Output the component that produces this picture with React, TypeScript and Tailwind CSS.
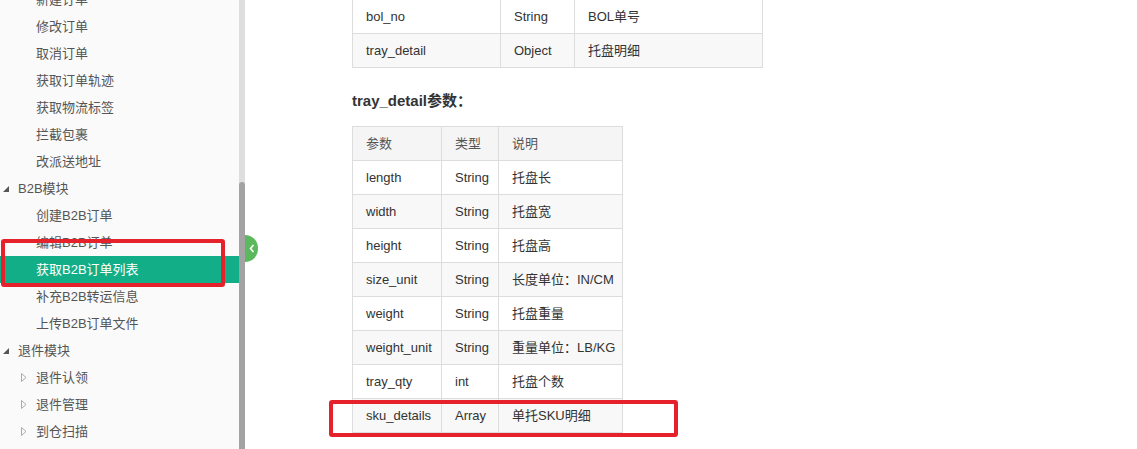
import React from 'react';

type NavItem = { label: string; level: 'group' | 'item' | 'folder'; active?: boolean };

const navItems: NavItem[] = [
  { label: '新建订单', level: 'item' },
  { label: '修改订单', level: 'item' },
  { label: '取消订单', level: 'item' },
  { label: '获取订单轨迹', level: 'item' },
  { label: '获取物流标签', level: 'item' },
  { label: '拦截包裹', level: 'item' },
  { label: '改派送地址', level: 'item' },
  { label: 'B2B模块', level: 'group' },
  { label: '创建B2B订单', level: 'item' },
  { label: '编辑B2B订单', level: 'item' },
  { label: '获取B2B订单列表', level: 'item', active: true },
  { label: '补充B2B转运信息', level: 'item' },
  { label: '上传B2B订单文件', level: 'item' },
  { label: '退件模块', level: 'group' },
  { label: '退件认领', level: 'folder' },
  { label: '退件管理', level: 'folder' },
  { label: '到仓扫描', level: 'folder' },
];

const topRows = [
  ['bol_no', 'String', 'BOL单号'],
  ['tray_detail', 'Object', '托盘明细'],
];

const trayRows = [
  ['length', 'String', '托盘长'],
  ['width', 'String', '托盘宽'],
  ['height', 'String', '托盘高'],
  ['size_unit', 'String', '长度单位：IN/CM'],
  ['weight', 'String', '托盘重量'],
  ['weight_unit', 'String', '重量单位：LB/KG'],
  ['tray_qty', 'int', '托盘个数'],
  ['sku_details', 'Array', '单托SKU明细'],
];

const font = { fontFamily: '"Liberation Sans", "Noto Sans CJK SC", sans-serif' };

const NavRow: React.FC<{ item: NavItem }> = ({ item }) => {
  const base = 'relative h-[27px] leading-[27px] text-[13px] whitespace-nowrap';
  if (item.level === 'group') {
    return (
      <div className={`${base} pl-[18px] text-[#555]`}>
        <svg className="absolute left-[3px] top-[11px]" width="6" height="6" viewBox="0 0 6 6">
          <polygon points="6,0 6,6 0,6" fill="#555" />
        </svg>
        {item.label}
      </div>
    );
  }
  if (item.level === 'folder') {
    return (
      <div className={`${base} pl-[36px] text-[#555]`}>
        <svg className="absolute left-[21px] top-[9px]" width="6" height="9" viewBox="0 0 6 9">
          <polygon points="0.5,0.5 5,4.5 0.5,8.5" fill="none" stroke="#aaa" strokeWidth="1" />
        </svg>
        {item.label}
      </div>
    );
  }
  return (
    <div className={`${base} pl-[36px] ${item.active ? 'bg-[#12ae87] text-white' : 'text-[#555]'}`}>
      {item.label}
    </div>
  );
};

const DocTable: React.FC<{ widths: number[]; rows: string[][]; head?: string[]; className: string }> = ({
  widths,
  rows,
  head,
  className,
}) => (
  <table className={`table-fixed border-collapse text-[13px] text-[#333] ${className}`}>
    <colgroup>
      {widths.map((w, i) => (
        <col key={i} style={{ width: w }} />
      ))}
    </colgroup>
    {head && (
      <thead>
        <tr className="bg-[#f5f5f5]">
          {head.map((h) => (
            <th key={h} className="h-[34px] border border-[#ddd] pl-[13px] text-left font-normal text-[#555]">
              {h}
            </th>
          ))}
        </tr>
      </thead>
    )}
    <tbody>
      {rows.map((r, i) => (
        <tr key={r[0]} className={i % 2 === 1 ? 'bg-[#f8f8f8]' : 'bg-white'}>
          {r.map((c, j) => (
            <td key={j} className="h-[34px] border border-[#ddd] pl-[13px] text-left">
              {c}
            </td>
          ))}
        </tr>
      ))}
    </tbody>
  </table>
);

const App: React.FC = () => {
  return (
    <div className="relative flex h-[449px] w-[1137px] overflow-hidden bg-white" style={font}>
      <aside className="w-[239px] shrink-0 bg-[#fafafa]">
        <div className="-mt-[14px]">
          {navItems.map((item) => (
            <NavRow key={item.label} item={item} />
          ))}
        </div>
      </aside>

      {/* scrollbar */}
      <div className="flex w-[6px] shrink-0 flex-col bg-[#dedede]">
        <div className="mt-[182px] flex-1 rounded-t-[3px] bg-[#a3a3a3]" />
      </div>

      <main className="flex-1 pl-[107px]">
        <DocTable className="-mt-px w-[410px]" widths={[148, 74, 188]} rows={topRows} />
        <h3 className="mt-[22px] h-[22px] text-[15px] font-bold leading-[22px] text-[#333]">tray_detail参数：</h3>
        <DocTable
          className="mt-[14px] w-[270px]"
          widths={[89, 57, 124]}
          head={['参数', '类型', '说明']}
          rows={trayRows}
        />
      </main>

      {/* sidebar toggle */}
      <button className="absolute left-[245px] top-[235px] flex h-[27px] w-[13px] items-center justify-center rounded-r-full bg-[#5cb85c]">
        <svg width="6" height="9" viewBox="0 0 6 9">
          <polyline points="4.5,1 1.5,4.5 4.5,8" fill="none" stroke="#fff" strokeWidth="1.6" />
        </svg>
      </button>

      {/* red annotations */}
      <div className="pointer-events-none absolute left-[1px] top-[239px] h-[48px] w-[224px] rounded-[3px] border-[4px] border-[#e5212b]" />
      <div className="pointer-events-none absolute left-[329px] top-[400px] h-[37px] w-[349px] rounded-[3px] border-[4px] border-[#e5212b]" />
    </div>
  );
};

export default App;
